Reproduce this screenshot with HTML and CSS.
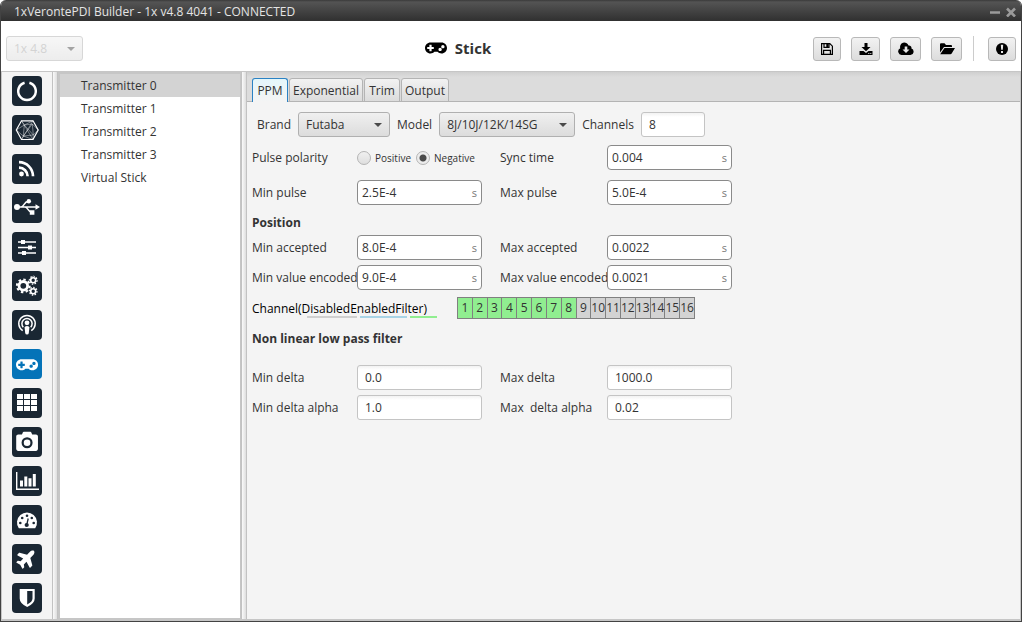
FILE: index.html
```
<!DOCTYPE html>
<html lang="en">
<head>
<meta charset="utf-8">
<title>1xVerontePDI Builder</title>
<link rel="stylesheet" href="styles.css">
</head>
<body>
<div class="window">
  <header class="titlebar">
    <span class="titlebar-text">1xVerontePDI Builder - 1x v4.8 4041 - CONNECTED</span>
    <button class="win-btn" aria-label="Minimize"><svg width="10" height="10" viewBox="0 0 10 10"><path d="M0 5.500h10" stroke="#9a9a9a" stroke-width="2.600"/></svg></button>
    <button class="win-btn" aria-label="Close"><svg width="10" height="10" viewBox="0 0 10 10"><path d="M1 1.500l8 8M9 1.500l-8 8" stroke="#9a9a9a" stroke-width="2.600"/></svg></button>
  </header>

  <div class="toolbar">
    <div class="toolbar-left">
      <span class="combo combo-disabled"><select aria-label="Version" disabled><option>1x 4.8</option></select></span>
    </div>
    <h1 class="page-title">
      <svg width="22" height="18" viewBox="0 0 640 512"><path fill-rule="evenodd" d="M480 96H160C71.600 96 0 167.600 0 256s71.600 160 160 160c44.800 0 85.200-18.400 114.200-48h91.500c29 29.600 69.500 48 114.200 48 88.400 0 160-71.600 160-160S568.400 96 480 96zM256 276c0 6.600-5.400 12-12 12h-52v52c0 6.600-5.400 12-12 12h-40c-6.600 0-12-5.400-12-12v-52H76c-6.600 0-12-5.400-12-12v-40c0-6.600 5.400-12 12-12h52v-52c0-6.600 5.400-12 12-12h40c6.600 0 12 5.400 12 12v52h52c6.600 0 12 5.400 12 12v40zm184 68c-26.500 0-48-21.500-48-48s21.500-48 48-48 48 21.500 48 48-21.500 48-48 48zm80-80c-26.500 0-48-21.500-48-48s21.500-48 48-48 48 21.500 48 48-21.500 48-48 48z"/></svg>
      Stick
    </h1>
    <div class="toolbar-actions">
      <button class="tool-btn" aria-label="Save"><svg width="14" height="14" viewBox="0 0 14 14"><path d="M1.600 1.600h8.200l2.600 2.600v8.200H1.600zM4 1.600v3.800h5V1.600M3.600 12.400V8.300h6.800v4.100" fill="none" stroke="#000" stroke-width="1.200"/><path d="M6.300 1.500h2.200v3.500H6.300z"/></svg></button>
      <button class="tool-btn tool-btn-mid" aria-label="Download"><svg width="14" height="14" viewBox="0 0 14 14"><path d="M5.500 1h3v4h3L7 9.300 2.500 5h3z"/><path fill-rule="evenodd" d="M.5 9h4L7 11l2.500-2h4v4H.5zM9.300 11v1h1v-1zM11.300 11v1h1v-1z"/></svg></button>
      <button class="tool-btn tool-btn-wide" aria-label="Download from cloud"><svg width="16" height="14" viewBox="0 0 16 14"><path fill-rule="evenodd" d="M4 13A3.500 3.500 0 0 1 2.300 6.300 4.300 4.300 0 0 1 10.500 3.500 2.500 2.500 0 0 1 13.400 6.600 3.300 3.300 0 0 1 12.500 13zM6.700 4.500v3H4.500L8 11l3.500-3.500H9.300v-3z"/></svg></button>
      <button class="tool-btn tool-btn-wide" aria-label="Open folder"><svg width="16" height="14" viewBox="0 0 16 14"><path d="M1 2.300q0-1 1-1h3.500L7 3h5q1 0 1 1v1H5L1 10.500zM5.500 6H16l-3.300 5.500q-.5.700-1.300.7H1.200z"/></svg></button>
      <span class="toolbar-divider"></span>
      <button class="tool-btn" aria-label="Alerts"><svg width="14" height="14" viewBox="0 0 14 14"><circle cx="7" cy="7" r="6"/><path d="M5.800 2.700h2.400l-.4 5.100H6.200zM6 8.900h2v2H6z" fill="#e8e8e8"/></svg></button>
    </div>
  </div>

  <div class="workspace">
    <nav class="sidebar" aria-label="Sections">
      <button class="nav-btn" aria-label="Status"><svg viewBox="0 0 30 30"><path d="M12.600 6.700a8.800 8.800 0 1 0 4.800 0" fill="none" stroke="#fff" stroke-width="2.500"/></svg></button>
      <button class="nav-btn" aria-label="Mesh"><svg viewBox="0 0 30 30"><g fill="none" stroke="#fff"><path d="M4.300 15L9.500 5.800h11.500L26.200 15 21 24.500H9.500z" stroke-width="1.200"/><path d="M9.500 5.800L21 24.500M21 5.800L9.500 24.500M4.300 15l8-5 8-1 5.900 6M4.300 15l7 6 10-1 4.900-5M12.300 10L9.500 5.800M12.300 10l-1 11-1.800 3.500M12.300 10L21 5.800M20.300 9l1 11-.3 4.500M11.300 21l9.700 3.500M12.300 10l9 10M20.300 9l-9 12" stroke-width=".5" stroke-opacity=".8"/></g></svg></button>
      <button class="nav-btn" aria-label="Telemetry"><svg viewBox="0 0 30 30"><circle cx="9.500" cy="20" r="2.400" fill="#fff"/><path d="M7 13.700a8.600 8.600 0 0 1 8.600 8.600M7 8.200a14 14 0 0 1 14 14.100" fill="none" stroke="#fff" stroke-width="2.700"/></svg></button>
      <button class="nav-btn" aria-label="Connections"><svg viewBox="0 0 30 30"><g fill="none" stroke="#fff" stroke-width="1.500"><path d="M5 14h19M9 14c3 0 3-5.500 7-5.500M13 14c3 0 3 5.500 7 5.500"/></g><path d="M23.500 11.300l4.500 2.700-4.500 2.700zM17.800 17.300h4.600v4.400h-4.600z" fill="#fff"/><circle cx="5" cy="14" r="3" fill="#fff"/><circle cx="16.800" cy="8.300" r="2.200" fill="#fff"/></svg></button>
      <button class="nav-btn" aria-label="Settings"><svg viewBox="0 0 30 30"><path d="M6 10h18M6 15.500h18M6 21h18" stroke="#fff" stroke-width="1.500"/><path d="M9 8h4v4H9zM16 13.500h4v4h-4zM10 19h4v4h-4z" fill="#fff"/></svg></button>
      <button class="nav-btn" aria-label="Automations"><svg viewBox="0 0 30 30"><g fill="none" stroke="#fff"><circle cx="11.300" cy="14.800" r="4.300" stroke-width="2.800"/><circle cx="11.300" cy="14.800" r="6.400" stroke-width="2" pathLength="16" stroke-dasharray="1 1"/><circle cx="21.200" cy="9.300" r="2.500" stroke-width="1.600"/><circle cx="21.200" cy="9.300" r="3.800" stroke-width="1.400" pathLength="16" stroke-dasharray="1 1"/><circle cx="21.200" cy="20.200" r="2.500" stroke-width="1.600"/><circle cx="21.200" cy="20.200" r="3.800" stroke-width="1.400" pathLength="16" stroke-dasharray="1 1"/></g></svg></button>
      <button class="nav-btn" aria-label="Communications"><svg viewBox="0 0 30 30"><g fill="none" stroke="#fff" stroke-width="1.500"><path d="M10.700 20.600a8.200 8.200 0 1 1 8.600 0"/><path d="M11.300 17.200a5.100 5.100 0 1 1 7.400 0"/></g><circle cx="15" cy="12.800" r="2.400" fill="#fff"/><path d="M12.600 17.500q0-1.500 2.400-1.500t2.400 1.500l-.6 5.500q-.2 1.500-1.800 1.500t-1.800-1.500z" fill="#fff"/></svg></button>
      <button class="nav-btn nav-btn-active" aria-label="Stick" aria-current="page"><svg viewBox="0 0 30 30"><path transform="translate(4 7) scale(.0345)" fill="#fff" fill-rule="evenodd" d="M480 96H160C71.600 96 0 167.600 0 256s71.600 160 160 160c44.800 0 85.200-18.400 114.200-48h91.500c29 29.600 69.500 48 114.200 48 88.400 0 160-71.600 160-160S568.400 96 480 96zM256 276c0 6.600-5.400 12-12 12h-52v52c0 6.600-5.400 12-12 12h-40c-6.600 0-12-5.400-12-12v-52H76c-6.600 0-12-5.400-12-12v-40c0-6.600 5.400-12 12-12h52v-52c0-6.600 5.400-12 12-12h40c6.600 0 12 5.400 12 12v52h52c6.600 0 12 5.400 12 12v40zm184 68c-26.500 0-48-21.500-48-48s21.500-48 48-48 48 21.500 48 48-21.500 48-48 48zm80-80c-26.500 0-48-21.500-48-48s21.500-48 48-48 48 21.500 48 48-21.500 48-48 48z"/></svg></button>
      <button class="nav-btn" aria-label="Variables"><svg viewBox="0 0 30 30"><path d="M5 6h6v5H5zM12 6h6v5h-6zM19 6h6v5h-6zM5 12h6v5H5zM12 12h6v5h-6zM19 12h6v5h-6zM5 18h6v5H5zM12 18h6v5h-6zM19 18h6v5h-6z" fill="#fff"/></svg></button>
      <button class="nav-btn" aria-label="Camera"><svg viewBox="0 0 30 30"><path transform="translate(4.200 3.500) scale(.0425)" fill="#fff" fill-rule="evenodd" d="M512 144v288c0 26.500-21.500 48-48 48H48c-26.500 0-48-21.500-48-48V144c0-26.500 21.500-48 48-48h88l12.300-32.900c7-18.700 24.900-31.100 44.900-31.100h125.500c20 0 37.900 12.400 44.900 31.100L376 96h88c26.500 0 48 21.500 48 48zM386 288a130 130 0 1 0-260 0 130 130 0 1 0 260 0zM334 288a78 78 0 1 1-156 0 78 78 0 1 1 156 0z"/></svg></button>
      <button class="nav-btn" aria-label="Charts"><svg viewBox="0 0 30 30"><path d="M4.700 6v17.300H27" fill="none" stroke="#fff" stroke-width="1.400"/><path d="M8 14.500h3v6H8zM12.300 10.500h3v10h-3zM16.500 12.300h3v8.200h-3zM20.800 8h3v12.500h-3z" fill="#fff"/></svg></button>
      <button class="nav-btn" aria-label="Panel"><svg viewBox="0 0 30 30"><path d="M6.800 23.300A10 10 0 1 1 23.200 23.300z" fill="#fff"/><g fill="#1a2733"><circle cx="8.300" cy="18" r="1.300"/><circle cx="10.200" cy="13" r="1.300"/><circle cx="15" cy="10.700" r="1.300"/><circle cx="19.800" cy="13" r="1.300"/><circle cx="21.700" cy="18" r="1.300"/><circle cx="14.700" cy="20" r="2.100"/></g><path d="M14.700 20l1.500-6.500" stroke="#1a2733" stroke-width="1.300"/></svg></button>
      <button class="nav-btn" aria-label="Flight"><svg viewBox="0 0 30 30"><path transform="translate(14.700 14.300) rotate(-45) scale(.036) translate(-288 -256)" fill="#fff" d="M480 192H365.700L260.600 8a16 16 0 0 0-13.900-8h-65.500c-10.600 0-18.300 10.200-15.400 20.400L214.900 192H112l-43.200-57.600c-3-4-7.800-6.400-12.800-6.400H16C5.600 128-2 137.800.5 147.900L32 256 .5 364.100C-2 374.200 5.600 384 16 384h40c5 0 9.800-2.400 12.800-6.400L112 320h102.900l-49 171.600c-3 10.200 4.700 20.400 15.300 20.400h65.500c5.700 0 11-3.100 13.900-8L365.700 320H480c35.400 0 96-28.700 96-64s-60.600-64-96-64z"/></svg></button>
      <button class="nav-btn" aria-label="Safety"><svg viewBox="0 0 30 30"><path fill-rule="evenodd" d="M7.700 6h15v9.500q0 5-7.500 8.500-7.500-3.500-7.500-8.500zM15.200 8v13.500q5.300-2.700 5.300-6V8z" fill="#fff"/></svg></button>
    </nav>

    <div class="splitter"></div>

    <ul class="device-list">
      <li><button class="device device-selected">Transmitter 0</button></li>
      <li><button class="device">Transmitter 1</button></li>
      <li><button class="device">Transmitter 2</button></li>
      <li><button class="device">Transmitter 3</button></li>
      <li><button class="device">Virtual Stick</button></li>
    </ul>

    <div class="splitter"></div>

    <main class="panel">
      <div class="tabs" role="tablist">
        <button class="tab tab-active" role="tab" aria-selected="true">PPM</button>
        <button class="tab" role="tab">Exponential</button>
        <button class="tab" role="tab">Trim</button>
        <button class="tab" role="tab">Output</button>
      </div>

      <form class="form">
        <div class="model-row">
          <label for="brand">Brand</label>
          <span class="combo combo-brand"><select id="brand"><option>Futaba</option></select></span>
          <label for="model">Model</label>
          <span class="combo combo-model"><select id="model"><option>8J/10J/12K/14SG</option></select></span>
          <label for="channels">Channels</label>
          <input class="field field-channels" id="channels" type="text" value="8">
        </div>

        <div class="grid grid-loose">
          <span id="polarity">Pulse polarity</span>
          <div class="radios" role="radiogroup" aria-labelledby="polarity">
            <label class="radio"><input type="radio" name="polarity">Positive</label>
            <label class="radio"><input type="radio" name="polarity" checked>Negative</label>
          </div>
          <label for="sync">Sync time</label>
          <span class="unit-field"><input id="sync" type="text" value="0.004"><span class="unit">s</span></span>
          <label for="minpulse">Min pulse</label>
          <span class="unit-field"><input id="minpulse" type="text" value="2.5E-4"><span class="unit">s</span></span>
          <label for="maxpulse">Max pulse</label>
          <span class="unit-field"><input id="maxpulse" type="text" value="5.0E-4"><span class="unit">s</span></span>
        </div>

        <h2 class="section-title">Position</h2>
        <div class="grid">
          <label for="minacc">Min accepted</label>
          <span class="unit-field"><input id="minacc" type="text" value="8.0E-4"><span class="unit">s</span></span>
          <label for="maxacc">Max accepted</label>
          <span class="unit-field"><input id="maxacc" type="text" value="0.0022"><span class="unit">s</span></span>
          <label for="minenc">Min value encoded</label>
          <span class="unit-field"><input id="minenc" type="text" value="9.0E-4"><span class="unit">s</span></span>
          <label for="maxenc">Max value encoded</label>
          <span class="unit-field"><input id="maxenc" type="text" value="0.0021"><span class="unit">s</span></span>
        </div>

        <div class="channel-row">
          <span class="channel-label">Channel(DisabledEnabledFilter)</span>
          <div class="channels">
            <button type="button" class="ch ch-on">1</button><button type="button" class="ch ch-on">2</button><button type="button" class="ch ch-on">3</button><button type="button" class="ch ch-on">4</button><button type="button" class="ch ch-on">5</button><button type="button" class="ch ch-on">6</button><button type="button" class="ch ch-on">7</button><button type="button" class="ch ch-on">8</button><button type="button" class="ch">9</button><button type="button" class="ch">10</button><button type="button" class="ch">11</button><button type="button" class="ch">12</button><button type="button" class="ch">13</button><button type="button" class="ch">14</button><button type="button" class="ch">15</button><button type="button" class="ch">16</button>
          </div>
        </div>

        <h2 class="section-title section-filter">Non linear low pass filter</h2>
        <div class="grid">
          <label for="mind">Min delta</label>
          <input class="field" id="mind" type="text" value="0.0">
          <label for="maxd">Max delta</label>
          <input class="field" id="maxd" type="text" value="1000.0">
          <label for="minda">Min delta alpha</label>
          <input class="field" id="minda" type="text" value="1.0">
          <label class="pre" for="maxda">Max  delta alpha</label>
          <input class="field" id="maxda" type="text" value="0.02">
        </div>
      </form>
    </main>
  </div>
</div>
</body>
</html>
```
FILE: styles.css
```
* { box-sizing: border-box; }

body {
  margin: 0;
  background: #fff;
  color: #333;
  font: 12px/16px "Open Sans", "Noto Sans", sans-serif;
}

button, input, select { font: inherit; color: inherit; }
button { padding: 0; }
svg { display: block; }
h1, h2, ul { margin: 0; padding: 0; list-style: none; }

.window {
  display: flex;
  flex-direction: column;
  min-height: 100vh;
  border: 1px solid #434343;
  border-top: 0;
  border-radius: 6px 6px 0 0;
  overflow: hidden;
}

.titlebar {
  display: flex;
  align-items: center;
  gap: 6px;
  height: 21px;
  padding: 2px 5px 0 13px;
  background: linear-gradient(#3a3a3a, #545454 2px, #303030);
  color: #e4e4e4;
}
.titlebar-text { flex: 1; }
.win-btn { border: 0; background: none; }

.toolbar {
  display: flex;
  align-items: center;
  justify-content: space-between;
  height: 50px;
  padding: 5px 5px 0;
  background: #fff;
}
.toolbar-left { width: 97px; }
.page-title {
  display: flex;
  align-items: center;
  gap: 8px;
  padding-bottom: 2px;
  font-size: 15px;
  line-height: 20px;
}
.toolbar-actions { display: flex; align-items: center; gap: 10px; }
.toolbar-divider { width: 1px; height: 25px; margin: 0 4px 0 1px; background: #ccc; }

.tool-btn {
  display: grid;
  place-items: center;
  width: 28px;
  height: 24px;
  border: 1px solid #b8b8b8;
  border-radius: 3px;
  background: linear-gradient(#f2f2f2, #dcdcdc);
}
.tool-btn-mid { width: 29px; }
.tool-btn-wide { width: 31px; }

.combo { display: inline-grid; align-items: center; }
.combo select, .combo::after { grid-area: 1 / 1; }
.combo select {
  appearance: none;
  width: 100%;
  height: 25px;
  padding: 0 20px 0 7px;
  border: 1px solid #b0b0b0;
  border-radius: 3px;
  background: linear-gradient(#f0f0f0, #dcdcdc);
}
.combo::after {
  content: "";
  justify-self: end;
  margin-right: 8px;
  border: 4px solid transparent;
  border-top-color: #4a4a4a;
  border-bottom: 0;
  pointer-events: none;
}
.combo-disabled { width: 77px; opacity: .5; vertical-align: top; }
.combo-disabled select { opacity: 1; color: #a8a8a8; }
.combo-brand { width: 92px; }
.combo-model { width: 136px; }

.workspace {
  display: flex;
  flex: 1;
  border: solid #c6c6c6;
  border-width: 1px 1px 2px;
  background: #f4f4f4;
}

.sidebar {
  display: flex;
  flex-direction: column;
  align-items: center;
  gap: 9px;
  width: 50px;
  padding: 4px 0;
}
.nav-btn {
  width: 30px;
  height: 30px;
  border: 0;
  border-radius: 4px;
  background: #1a2733;
}
.nav-btn-active { background: #0473b8; }

.splitter {
  width: 6px;
  border: solid #c2c2c2;
  border-width: 0 1px;
  background: linear-gradient(90deg, #fafafa, #dedede);
}

.device-list {
  width: 183px;
  border: solid #c6c6c6;
  border-width: 2px 1px 1px 2px;
  background: #fff;
}
.device {
  display: block;
  width: 100%;
  height: 23px;
  padding-left: 21px;
  border: 0;
  background: none;
  text-align: left;
}
.device-selected { background: #d3d3d3; }

.panel { flex: 1; }

.tabs {
  display: flex;
  align-items: flex-end;
  gap: 1px;
  height: 30px;
  padding: 0 5px;
  background: linear-gradient(#cfcfcf, #dcdcdc 5px);
  box-shadow: inset 0 -1px #b4b4b4;
}
.tab {
  min-width: 36px;
  height: 24px;
  padding: 1px 3px 0;
  border: 1px solid #b4b4b4;
  border-radius: 3px 3px 0 0;
  background: linear-gradient(#f2f2f2, #dcdcdc);
}
.tab-active {
  border-color: #2a82c4;
  border-bottom: 0;
  background: linear-gradient(#e4f6fa, #f4f4f4);
}

.form { padding: 10px 5px; }

.model-row { display: flex; align-items: center; gap: 7px; padding-left: 5px; }

.field, .unit-field input {
  width: 100%;
  height: 25px;
  padding: 0 7px;
  border: 1px solid #c4c4c4;
  border-radius: 3px;
  background: linear-gradient(#f2f2f2, #fff 4px);
}
.model-row .field-channels { width: 64px; }

.unit-field { display: grid; align-items: center; }
.unit-field input {
  grid-area: 1 / 1;
  padding: 0 18px 0 4px;
  border-color: #8a8a8a;
  border-radius: 4px;
  background: #fff;
}
.unit { grid-area: 1 / 1; justify-self: end; margin-right: 5px; color: #777; font-size: 11px; }

.grid {
  display: grid;
  grid-template-columns: 105px 125px 125px 125px;
  row-gap: 5px;
  align-items: center;
  white-space: nowrap;
}
.grid > :nth-child(4n + 3) { margin-left: 18px; }
.grid-loose { row-gap: 10px; margin-top: 8px; }

.radios { display: flex; gap: 5px; font-size: 10px; }
.radio { display: flex; align-items: center; gap: 4px; }
.radio input {
  appearance: none;
  width: 14px;
  height: 14px;
  margin: 0;
  border: 1px solid #b4b4b4;
  border-radius: 50%;
  background: linear-gradient(#f0f0f0, #dedede);
}
.radio input:checked { background: radial-gradient(circle, #4a4a4a 0 3px, #ececec 4px); }

.section-title { margin: 10px 0 4px; font-size: 12px; line-height: 16px; }
.section-filter { margin: 12px 0 18px; }

.channel-row { display: flex; align-items: center; margin-top: 7px; }
.channel-label {
  width: 205px;
  padding: 2px 0 1px;
  color: #000;
  background:
    linear-gradient(#d0d0d0, #d0d0d0) 55px 100% / 50px 2px no-repeat,
    linear-gradient(#a8d4e6, #a8d4e6) 108px 100% / 47px 2px no-repeat,
    linear-gradient(#90ee90, #90ee90) 158px 100% / 27px 2px no-repeat;
}
.channels { display: flex; width: 238px; border: solid #808080; border-width: 1px 0 1px 1px; }
.ch {
  flex: 1 1 0;
  min-width: 0;
  height: 20px;
  border: 0;
  border-right: 1px solid #808080;
  background: #d3d3d3;
}
.ch-on { background: #90ee90; }
.pre { white-space: pre; }
```
